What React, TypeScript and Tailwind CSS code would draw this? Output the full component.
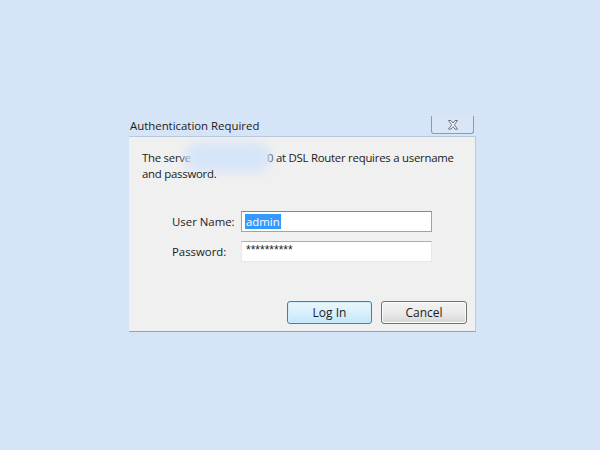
import React from 'react';

const CloseGlyph = () => (
  <svg width="12" height="10" viewBox="0 0 12 10">
    <path
      d="M1.5 0.5h2.5l2 2.6 2-2.6h2.5l-3.2 4.3 3.2 4.3h-2.5l-2-2.6-2 2.6h-2.5l3.2-4.3z"
      fill="#ffffff"
      stroke="#6b7380"
      strokeWidth="1"
      strokeLinejoin="round"
    />
  </svg>
);

export default function App() {
  return (
    <div className="w-[600px] h-[450px] bg-[#d5e4f7] pt-[116px] pl-[129px] font-['Open_Sans',sans-serif] text-[11.4px] text-[#1b1b1b]">
      <div className="w-[347px]">
        {/* Title strip */}
        <div className="h-[20px] flex justify-between">
          <span className="pl-[1px] pt-[1px] leading-[18px]">Authentication Required</span>
          <button className="w-[43px] h-[18px] mr-[2px] flex items-center justify-center border border-t-0 border-[#8e9aaa] rounded-b-[3px] bg-[#d8e6f8]">
            <CloseGlyph />
          </button>
        </div>

        {/* Dialog body */}
        <div className="h-[196px] bg-[#f0f0f0] border-t border-t-[#b8c7db] border-r border-r-[#c4c9d0] border-b border-b-[#8ea2bf] flex flex-col">
          <p className="mt-[13px] pl-[13px] pr-[6px] leading-[16px] tracking-[-0.25px]">
            The serve
            <span className="relative inline-block w-[76px] h-[10px]">
              <span className="absolute -left-[6px] -right-[4px] -top-[9px] -bottom-[10px] rounded-full bg-[#d6e5f8] blur-[5px]" />
            </span>
            0 at DSL Router requires a username <span className="relative">and password.</span>
          </p>

          <div className="mt-[29px] pl-[43px] flex flex-col gap-[9px]">
            <div className="flex items-center">
              <label className="w-[69px]">User Name:</label>
              <div className="w-[191px] h-[21px] border border-[#7fa9d6] border-t-[#5d8ec6] bg-white flex items-center pl-[3px]">
                <span className="bg-[#3399ff] text-white leading-[15px] px-[1px]">admin</span>
              </div>
            </div>
            <div className="flex items-center">
              <label className="w-[69px]">Password:</label>
              <div className="w-[191px] h-[21px] border border-[#e3e9ef] border-t-[#abadb3] bg-white flex items-start pl-[4px] pt-[1px]">
                <span className="font-['Liberation_Sans',sans-serif] text-[12px] leading-[14px]">**********</span>
              </div>
            </div>
          </div>

          <div className="mt-[39px] pr-[8px] flex justify-end gap-[9px]">
            <button className="w-[85px] h-[23px] rounded-[3px] border border-[#3c7fb1] bg-gradient-to-b from-[#eaf6fd] via-[#d9f0fc] to-[#bee6fd] shadow-[inset_0_0_0_1px_#d2edfa] leading-[21px] text-[12px]">
              Log In
            </button>
            <button className="w-[86px] h-[23px] rounded-[3px] border border-[#707070] bg-gradient-to-b from-[#f2f2f2] via-[#ebebeb] to-[#d6d6d6] shadow-[inset_0_0_0_1px_#fcfcfc] leading-[21px] text-[12px]">
              Cancel
            </button>
          </div>
        </div>
      </div>
    </div>
  );
}
